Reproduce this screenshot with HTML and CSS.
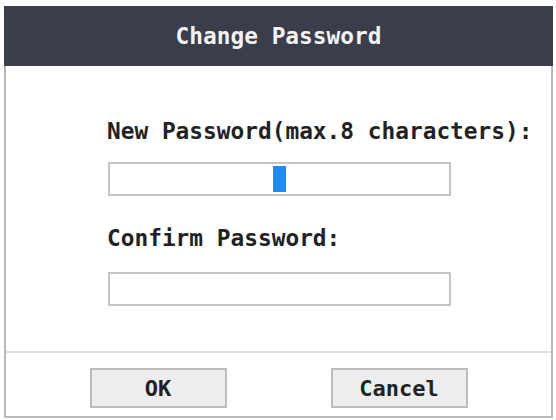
FILE: index.html
```html
<!DOCTYPE html>
<html lang="en">
<head>
  <meta charset="UTF-8">
  <title>Change Password</title>
  <link rel="stylesheet" href="styles.css">
</head>
<body>

<div class="dialog">
  <div class="dialog-title">Change Password</div>

  <div class="dialog-body">
    <label class="field-label">New Password(max.8 characters):</label>
    <div class="field-box active"><span class="caret"></span></div>

    <label class="field-label second">Confirm Password:</label>
    <div class="field-box last"></div>
  </div>

  <div class="dialog-footer">
    <button type="button" class="btn">OK</button>
    <button type="button" class="btn">Cancel</button>
  </div>
</div>

</body>
</html>
```

FILE: styles.css
```css
body {
  margin: 0;
  padding: 0;
  background-color: #fff;
  font-family: "DejaVu Sans Mono", "Liberation Mono", monospace;
}

.dialog {
  width: 545px;
  height: 410px;
  margin: 6px 0 0 4px;
  border: 2px solid #b9b9b9;
  border-top: none;
  display: flex;
  flex-direction: column;
  background-color: #fff;
}

.dialog-title {
  height: 60px;
  margin: 0 -2px;
  background-color: #3a3d4a;
  color: #f4f4f4;
  font-size: 22.8px;
  font-weight: bold;
  display: flex;
  align-items: center;
  justify-content: center;
}

.dialog-body {
  flex: 1;
  padding: 52px 0 0 101px;
}

.field-label {
  display: block;
  font-size: 22.8px;
  font-weight: bold;
  color: #222;
  line-height: 26px;
}

.field-label.second {
  margin-top: 29px;
}

.field-box {
  width: 339px;
  height: 30px;
  margin: 18px 0 0 1px;
  border: 2px solid #c4c4c4;
  display: flex;
  align-items: center;
  justify-content: center;
}

.field-box.last {
  margin-top: 21px;
}

.caret {
  width: 13px;
  height: 26px;
  background-color: #2389f0;
}

.dialog-footer {
  height: 48px;
  padding-top: 15px;
  border-top: 2px solid #dedede;
  display: flex;
  justify-content: center;
  align-items: flex-start;
  gap: 104px;
}

.btn {
  width: 137px;
  height: 40px;
  border: 2px solid #bcbcbc;
  background-color: #ededf0;
  font-family: "DejaVu Sans Mono", monospace;
  font-size: 22px;
  font-weight: bold;
  color: #222;
  padding: 0;
}
```
